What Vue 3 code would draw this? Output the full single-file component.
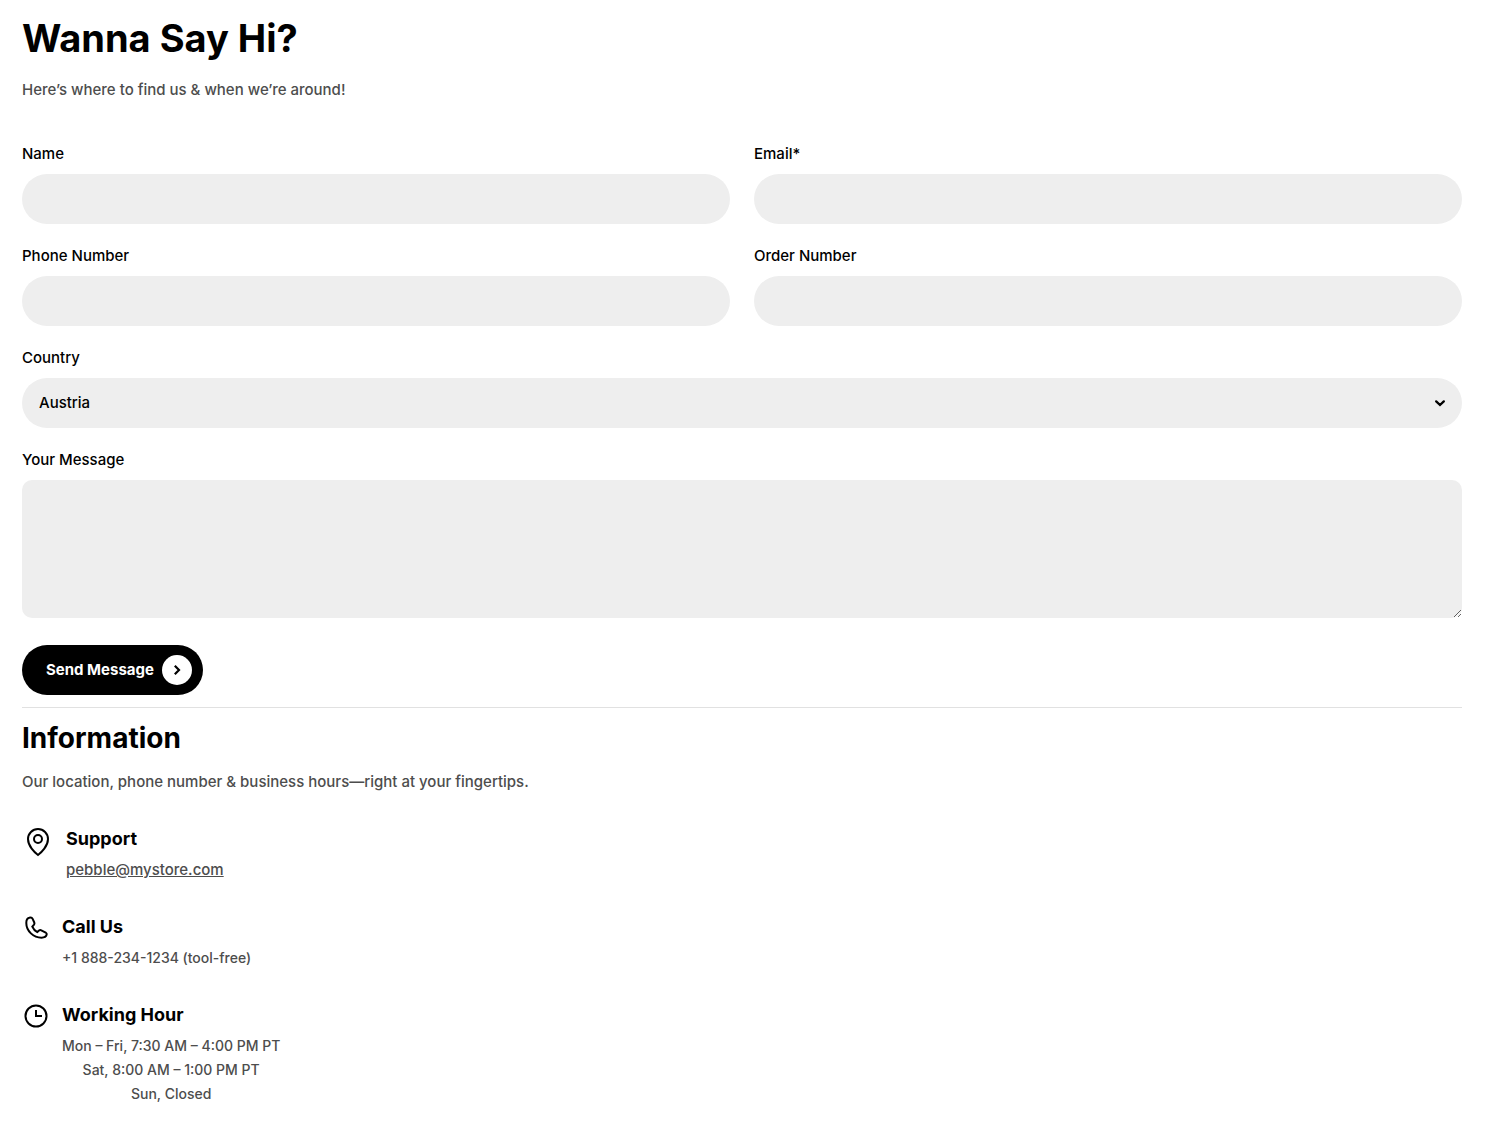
<script setup>
import { ref } from 'vue'

const fields = [
  { id: 'name', label: 'Name', type: 'text' },
  { id: 'email', label: 'Email*', type: 'email' },
  { id: 'phone', label: 'Phone Number', type: 'tel' },
  { id: 'order', label: 'Order Number', type: 'text' },
]
const form = ref({ name: '', email: '', phone: '', order: '', country: 'Austria', message: '' })
const countries = ['Austria', 'Belgium', 'France', 'Germany', 'United States']
</script>

<template>
  <main class="page">
    <header>
      <h1>Wanna Say Hi?</h1>
      <p class="lead">Here’s where to find us &amp; when we’re around!</p>
    </header>

    <form class="form" @submit.prevent>
      <div class="grid">
        <div v-for="f in fields" :key="f.id" class="field">
          <label :for="f.id">{{ f.label }}</label>
          <input :id="f.id" v-model="form[f.id]" :type="f.type" class="control" />
        </div>
      </div>
      <div class="field">
        <label for="country">Country</label>
        <div class="select">
          <select id="country" v-model="form.country" class="control">
            <option v-for="c in countries" :key="c">{{ c }}</option>
          </select>
          <svg class="caret" width="10" height="7" viewBox="0 0 10 7" aria-hidden="true">
            <path d="M1.200 1.400L5 5l3.800-3.600" fill="none" stroke="#000" stroke-width="2.300" stroke-linecap="round" />
          </svg>
        </div>
      </div>
      <div class="field">
        <label for="message">Your Message</label>
        <textarea id="message" v-model="form.message"></textarea>
      </div>
      <button type="submit" class="send">
        <span>Send Message</span>
        <span class="disc">
          <svg width="10" height="10" viewBox="0 0 10 10" aria-hidden="true">
            <path d="M2.800 .8L7 5 2.800 9.200" fill="none" stroke="#000" stroke-width="2.200" />
          </svg>
        </span>
      </button>
    </form>

    <section class="info">
      <h2>Information</h2>
      <p class="lead">Our location, phone number &amp; business hours—right at your fingertips.</p>

      <div class="items">
        <div class="item">
          <svg width="32" height="32" viewBox="0 0 32 32" aria-hidden="true">
            <path d="M16 29C12.500 26.500 6 20 6 13a10 10 0 0 1 20 0c0 7-6.500 13.500-10 16z" />
            <circle cx="16" cy="13" r="4" />
          </svg>
          <div>
            <h3>Support</h3>
            <p><a href="mailto:pebble@mystore.com">pebble@mystore.com</a></p>
          </div>
        </div>
        <div class="item">
          <svg width="28" height="28" viewBox="0 0 28 28" aria-hidden="true">
            <path d="M7.200 3.800C5.300 4.300 4.300 6.500 4.300 9C4.300 17 11.500 23.700 19.500 23.700C22.300 23.700 24.200 22.600 24.700 20.600C24.900 19.700 24.500 19 23.700 18.500L19.300 16.300C18.500 15.900 17.700 16 17 16.600L15.300 18.100C13.200 17.100 11.300 15 10.300 12.700L12 10.700C12.500 10 12.600 9.300 12.300 8.500L10.500 4.600C9.900 3.400 8.500 3.400 7.200 3.800z" />
          </svg>
          <div>
            <h3>Call Us</h3>
            <p class="detail">+1 888-234-1234 (tool-free)</p>
          </div>
        </div>
        <div class="item">
          <svg width="28" height="28" viewBox="0 0 28 28" aria-hidden="true">
            <circle cx="14" cy="14" r="10.500" />
            <path d="M14 8v6h6" />
          </svg>
          <div>
            <h3>Working Hour</h3>
            <p class="detail hours">Mon – Fri, 7:30 AM – 4:00 PM PT<br />Sat, 8:00 AM – 1:00 PM PT<br />Sun, Closed</p>
          </div>
        </div>
      </div>
    </section>
  </main>
</template>

<style>
body {
  margin: 0;
  background: #fff;
}
</style>

<style scoped>
.page {
  padding: 14px 31px 15px 22px;
  font: 500 15px/24px Inter, "Liberation Sans", sans-serif;
  color: #000;
}
h1,
h2,
h3,
p {
  margin: 0;
}
h1 {
  font-size: 38px;
  line-height: 48px;
  font-weight: 700;
  margin-bottom: 16px;
}
h2 {
  font-size: 28px;
  line-height: 36px;
  font-weight: 700;
  margin-bottom: 14px;
}
h3 {
  font-size: 18px;
  line-height: 26px;
  font-weight: 700;
  margin-bottom: 6px;
}
p,
a {
  color: #4d4d4d;
}
.form {
  display: flex;
  flex-direction: column;
  gap: 20px;
  margin-top: 40px;
  padding-bottom: 12px;
  border-bottom: 1px solid #e1e1e1;
}
.grid {
  display: grid;
  grid-template-columns: 1fr 1fr;
  gap: 20px 24px;
}
.field {
  display: flex;
  flex-direction: column;
  gap: 8px;
}
.field label {
  align-self: flex-start;
}
.control,
textarea {
  box-sizing: border-box;
  width: 100%;
  border: 0;
  background: #eee;
  color: #000;
  font: inherit;
}
.control {
  height: 50px;
  padding: 0 17px;
  border-radius: 25px;
  appearance: none;
}
.select {
  position: relative;
}
.select .control {
  display: block;
}
.caret {
  position: absolute;
  right: 17px;
  top: 22px;
  pointer-events: none;
}
textarea {
  display: block;
  height: 138px;
  padding: 12px 17px;
  border-radius: 10px;
  resize: vertical;
}
.send {
  display: flex;
  align-items: center;
  align-self: flex-start;
  gap: 8px;
  height: 50px;
  margin-top: 7px;
  padding: 0 11px 0 24px;
  border: 0;
  border-radius: 25px;
  background: #000;
  color: #fff;
  font: inherit;
  font-weight: 700;
}
.disc {
  display: flex;
  align-items: center;
  justify-content: center;
  width: 30px;
  height: 30px;
  border-radius: 50%;
  background: #fff;
}
.info {
  padding-top: 12px;
}
.items {
  display: flex;
  flex-direction: column;
  gap: 32px;
  margin-top: 32px;
}
.item {
  display: flex;
  align-items: flex-start;
  gap: 12px;
}
.item svg {
  flex: none;
  fill: none;
  stroke: #000;
  stroke-width: 2;
}
.detail {
  font-size: 14px;
}
.hours {
  text-align: center;
}
</style>
